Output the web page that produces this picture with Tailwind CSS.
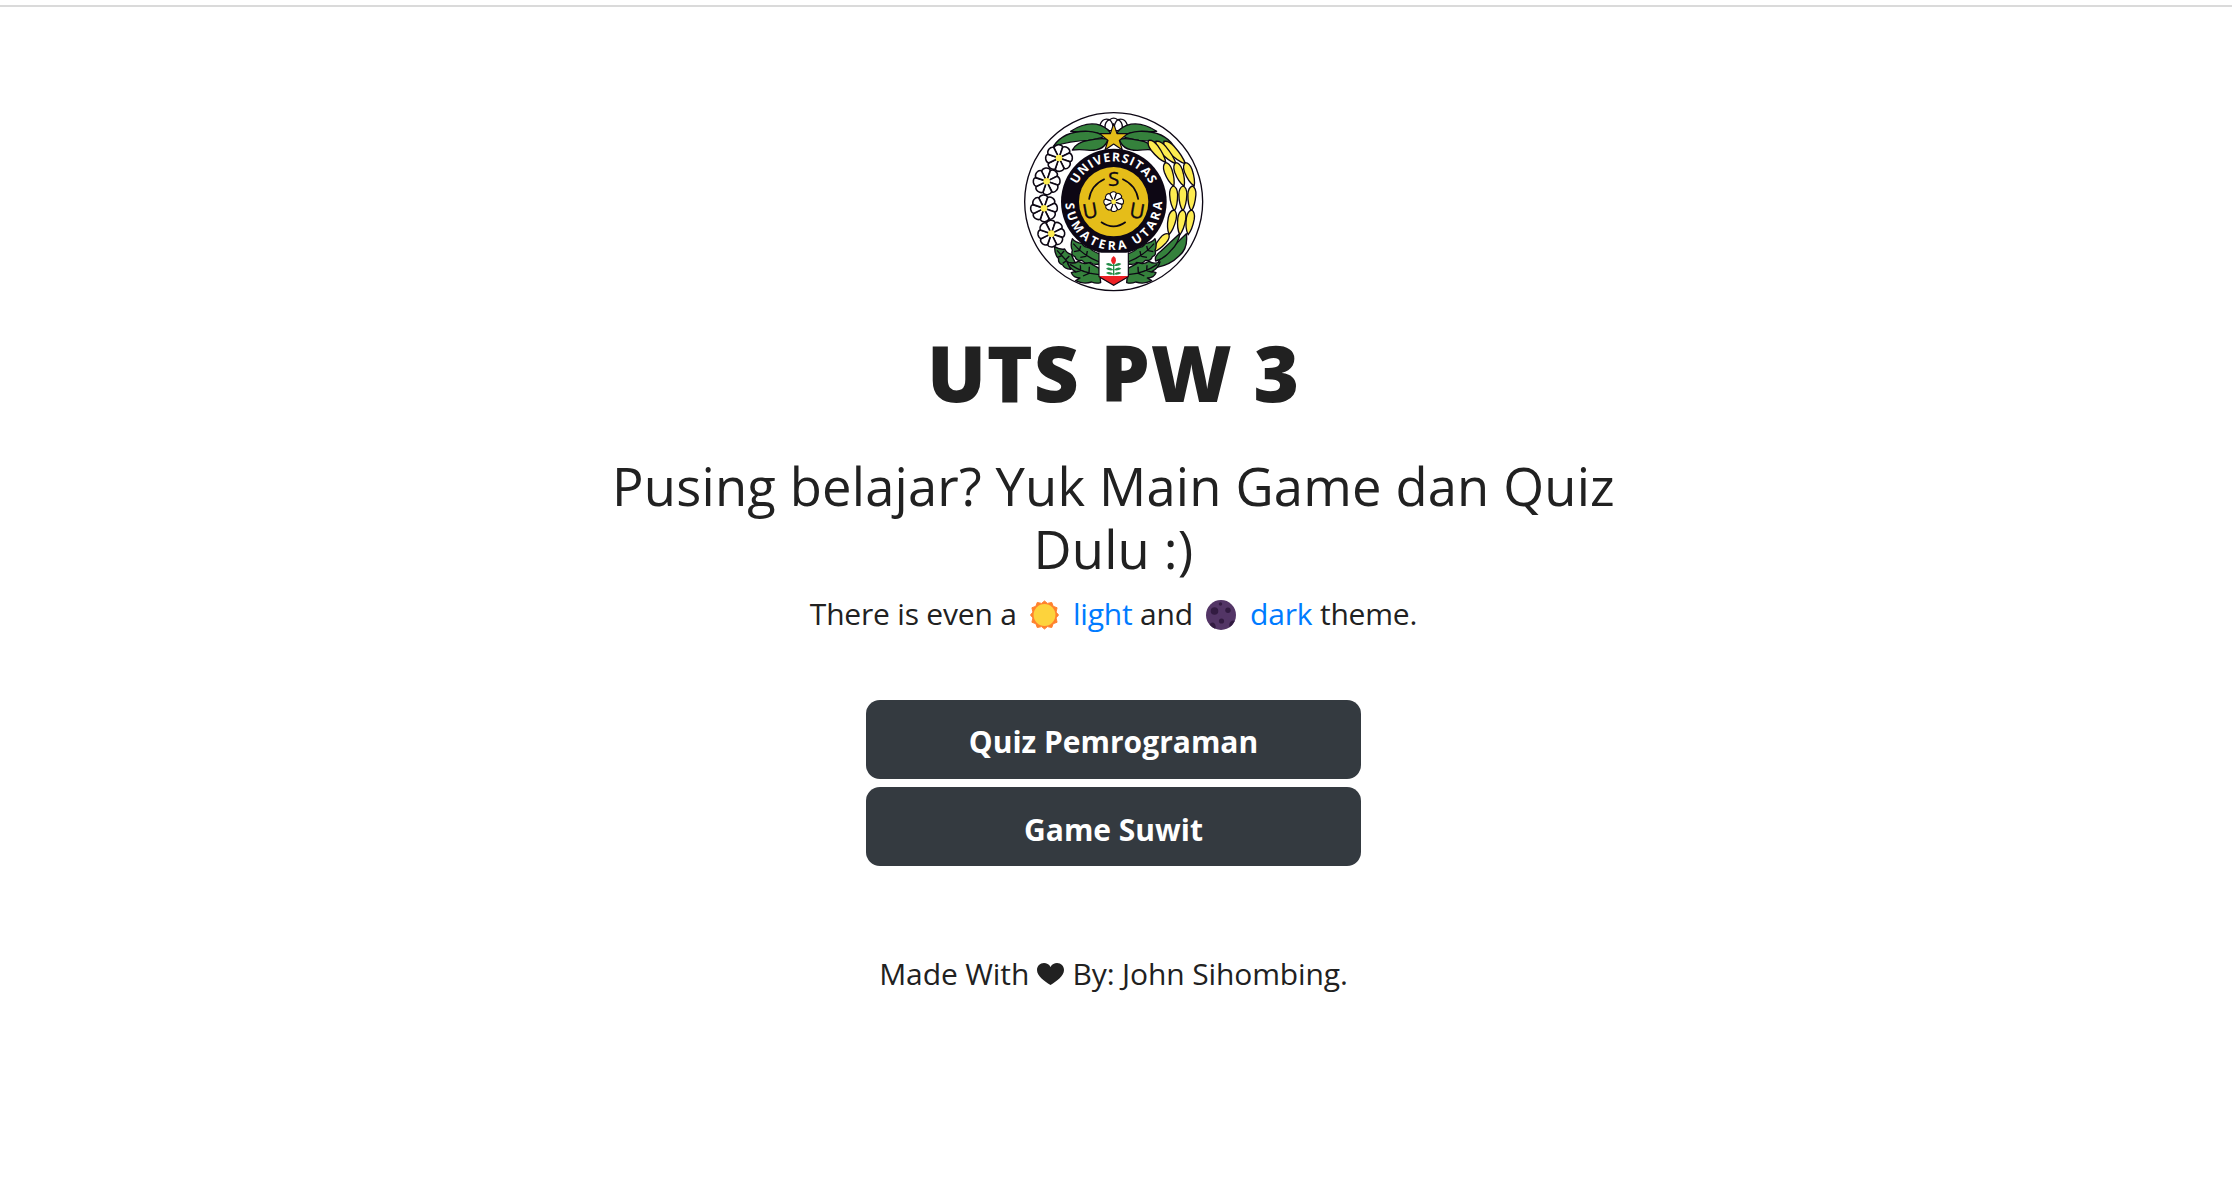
<!DOCTYPE html>
<html lang="id">
<head>
<meta charset="utf-8">
<title>UTS PW 3</title>
<script src="https://cdn.jsdelivr.net/npm/@tailwindcss/browser@4"></script>
</head>
<body class="min-h-screen overflow-hidden bg-white pt-[5px] font-['Open_Sans','Noto_Sans',sans-serif] text-[30px] leading-[45px] text-[#212121]">
<main class="flex flex-col items-center border-t-2 border-[#dadada] pr-[5px] pt-[93px]">
<svg class="h-[206px] w-[206px]" viewBox="3 0 618 618" role="img" aria-label="Universitas Sumatera Utara">
  <defs>
    <path id="petal" d="M0 0L-15 -31Q-13 -38 -3 -40Q8 -41 11 -34Z"/>
    <g id="flower" fill="#fff" stroke="#0d0714" stroke-width="4.500" stroke-linejoin="round">
      <use href="#petal"/><use href="#petal" transform="rotate(45)"/><use href="#petal" transform="rotate(90)"/><use href="#petal" transform="rotate(135)"/><use href="#petal" transform="rotate(180)"/><use href="#petal" transform="rotate(225)"/><use href="#petal" transform="rotate(270)"/><use href="#petal" transform="rotate(315)"/>
      <circle r="10" fill="#fdec50" stroke="none"/>
    </g>
    <path id="pod" d="M0 0Q12 5 12 26Q11 58 1 75Q-11 58 -12 26Q-12 5 0 0Z"/>
    <g id="fronds" fill="#35813c" stroke="#0d0714" stroke-width="4" stroke-linejoin="round">
      <path d="M182 94Q230 62 272 76Q296 86 304 104Q278 106 262 99Z"/>
      <path d="M130 139Q162 91 235 94Q262 96 284 109Q265 117 235 121Q180 123 130 139Z"/>
      <path d="M187 150Q200 126 235 121Q270 113 294 117Q286 151 240 151Q210 147 187 150Z"/>
    </g>
    <g id="leafpair" fill="#35813c" stroke="#0d0714" stroke-width="4" stroke-linejoin="round">
      <path d="M187 416Q196 428 216 431Q222 442 240 444Q246 454 270 462L268 492Q250 496 242 487Q226 494 216 481Q200 484 195 470Q182 466 187 451Q180 436 187 416Z"/>
      <path d="M172 486Q190 494 205 484Q220 495 237 488Q250 496 268 505L272 548Q258 552 245 546Q220 554 197 542L210 534Q190 533 184 518L196 514Q178 506 172 486Z"/>
      <path fill="none" d="M190 431Q218 466 268 486M208 453L212 438M207 452L192 455M229 469L232 453M228 469L211 472M180 493Q220 520 268 524M212 512L211 496M212 512L194 517M237 520L238 500M237 520L219 528"/>
    </g>
    <path id="topArc" d="M197.4 343A120 120 0 1 1 424.6 343"/>
    <path id="bottomArc" d="M166 305A145 145 0 0 0 456 305"/>
  </defs>
  <circle cx="311" cy="305" r="267" fill="#fff" stroke="#0d0714" stroke-width="4"/>
  <g fill="#fff" stroke="#0d0714" stroke-width="4"><path d="M270 75Q278 52 299 59Q311 50 323 59Q344 52 352 75L325 92H297Z"/><path fill="none" d="M299 59Q284 64 285 84M299 59Q309 68 309 82M323 59Q338 64 337 84M323 59Q313 68 313 82"/></g>
  <use href="#fronds"/><use href="#fronds" transform="matrix(-1 0 0 1 622 0)"/>
  <use href="#flower" x="147" y="174"/><use href="#flower" x="110" y="244"/><use href="#flower" x="102" y="325"/><use href="#flower" x="124" y="401"/>
  <g fill="#35813c" stroke="#0d0714" stroke-width="4" stroke-linejoin="round">
    <path d="M529 401Q535 445 507 468Q480 495 441 502Q442 482 460 468Z"/>
    <path d="M510 400Q505 430 485 449Q465 475 437 483Q432 468 453 453Z"/>
    <path d="M134 440Q148 450 164 447Q170 460 184 463Q188 475 197 490L172 487L182 508Q163 506 158 495Q143 489 146 476Q133 464 134 440Z"/>
    <path fill="none" d="M141 451L180 494M153 464L162 453M166 480L178 468M156 467L145 471M168 483L158 490"/>
  </g>
  <g fill="#fdec50" stroke="#0d0714" stroke-width="4" stroke-linejoin="round">
    <use href="#pod" transform="translate(462 124) rotate(-43) scale(1 1.24)"/>
    <use href="#pod" transform="translate(438 124) rotate(-41) scale(1 1.2)"/>
    <use href="#pod" transform="translate(416 121) rotate(-37) scale(1 1.12)"/>
    <use href="#pod" transform="translate(526 188) rotate(-20)"/><use href="#pod" transform="translate(497 188) rotate(-19)"/><use href="#pod" transform="translate(466 188) rotate(-19)"/>
    <use href="#pod" transform="translate(547 258) rotate(3)"/><use href="#pod" transform="translate(519 258) rotate(1)"/><use href="#pod" transform="translate(490 258) rotate(-2)"/>
    <use href="#pod" transform="translate(545 330) rotate(9)"/><use href="#pod" transform="translate(519 330) rotate(8)"/><use href="#pod" transform="translate(492 330) rotate(12)"/>
    <use href="#pod" transform="translate(476 402) rotate(41) scale(.95)"/>
  </g>
  <use href="#leafpair"/><use href="#leafpair" transform="matrix(-1 0 0 1 622 0)"/>
  <circle cx="311.500" cy="305" r="158.500" fill="#0d0714"/>
  <circle cx="311" cy="305" r="104" fill="#e5bd19"/>
  <path d="M311 71L321 101H353L328 121L337 150L311 132L285 150L294 121L269 101H301Z" fill="#e5bd19" stroke="#0d0714" stroke-width="3.500" stroke-linejoin="round"/>
  <g fill="#fff" font-family="Open Sans" font-weight="700" font-size="37">
    <text><textPath href="#topArc" startOffset="91" textLength="272">UNIVERSITAS</textPath></text>
    <text><textPath href="#bottomArc" startOffset="5" textLength="450">SUMATERA UTARA</textPath></text>
  </g>
  <g fill="#0d0714" stroke="#0d0714" stroke-width="1" font-family="Open Sans" font-size="62" text-anchor="middle">
    <text x="311" y="258">S</text>
    <text transform="translate(244 354) rotate(-10)">U</text>
    <text transform="translate(378 354) rotate(10)">U</text>
  </g>
  <path d="M237 299Q243 255 284 237M337 237Q378 255 385 299M273 366Q311 392 347 366" fill="none" stroke="#0d0714" stroke-width="5"/>
  <use href="#flower" transform="translate(311 305) scale(.74)"/>
  <path d="M267 458H355V530L311 556L267 530Z" fill="#fff"/>
  <path d="M267 528H355V532L311 556L267 532Z" fill="#ed2024"/>
  <path d="M267 457V530L311 556L355 530V457" fill="none" stroke="#0d0714" stroke-width="3.500"/>
  <path d="M311 489V526" stroke="#238c47" stroke-width="4"/>
  <path d="M311 497Q298 484 287 492Q296 501 311 497Q324 484 334 492Q326 501 311 497ZM311 510Q298 497 288 506Q298 514 311 510Q324 497 334 506Q324 514 311 510ZM311 522Q298 511 288 519Q298 527 311 523Q324 511 334 519Q324 527 311 523Z" fill="#238c47"/>
  <path d="M311 468Q319 473 318 482L315 491H307L303 482Q303 473 311 468Z" fill="#ed2024"/>
</svg>
<h1 class="mt-[19px] text-[78px] font-extrabold leading-[94px] tracking-[0.8px]">UTS PW 3</h1>
<h2 class="mt-[35px] w-[1040px] text-center text-[52.5px] leading-[63px] tracking-[0.18px]">Pusing belajar? Yuk Main Game dan Quiz Dulu :)</h2>
<p class="mt-[11px] whitespace-nowrap tracking-[-0.2px]">There is even a <svg class="mx-[6px] inline-block h-[30px] w-[29px] align-[-5px]" viewBox="0 0 30 30"><path d="M15 0.500L18 3L22.500 2L24 6L28 7.500L27 12L29.500 15L27 18L28 22.500L24 24L22.500 28L18 27L15 29.500L12 27L7.500 28L6 24L2 22.500L3 18L0.500 15L3 12L2 7.500L6 6L7.500 2L12 3Z" fill="#ff822d" stroke="#ff822d" stroke-linejoin="round"/><circle cx="15" cy="15" r="11.300" fill="#fdd33c"/></svg> <a class="text-[#007bff]">light</a> and <svg class="mx-[6px] inline-block h-[30px] w-[30px] align-[-5px]" viewBox="0 0 30 30"><circle cx="15" cy="15" r="15" fill="#533566"/><g fill="#321b41"><circle cx="8.500" cy="11" r="3.800"/><circle cx="22" cy="10.300" r="2.700"/><circle cx="14.500" cy="4" r="1.700"/><circle cx="15.500" cy="21" r="2.600"/><path d="M3.500 24.500Q6 21 9 24Q10.500 27 9 28.700Q5.500 27.200 3.500 24.500ZM23.500 27.300Q22.500 22.500 25.500 21Q27.500 20 28.600 21.300Q27 25 23.500 27.300Z"/></g></svg> <a class="text-[#007bff]">dark</a> theme.</p>
<nav class="mt-[64px] flex w-[495px] flex-col gap-2 text-center font-bold text-white">
  <a class="h-[79px] rounded-[14px] bg-[#343a40] pt-[19px]">Quiz Pemrograman</a>
  <a class="h-[79px] rounded-[14px] bg-[#343a40] pt-5">Game Suwit</a>
</nav>
<footer class="mt-[85px] whitespace-nowrap tracking-[-0.12px]">Made With <svg class="mx-[0.5px] inline-block h-[22px] w-[27px] align-[0px]" viewBox="0 0 27 22"><path d="M13.500 4C15 1 17.500 0 20 0C24 0 27 3 27 7C27 13 20 18 13.500 22C7 18 0 13 0 7C0 3 3 0 7 0C9.500 0 12 1 13.500 4Z" fill="#212121"/></svg> By: John Sihombing.</footer>
</main>
</body>
</html>
